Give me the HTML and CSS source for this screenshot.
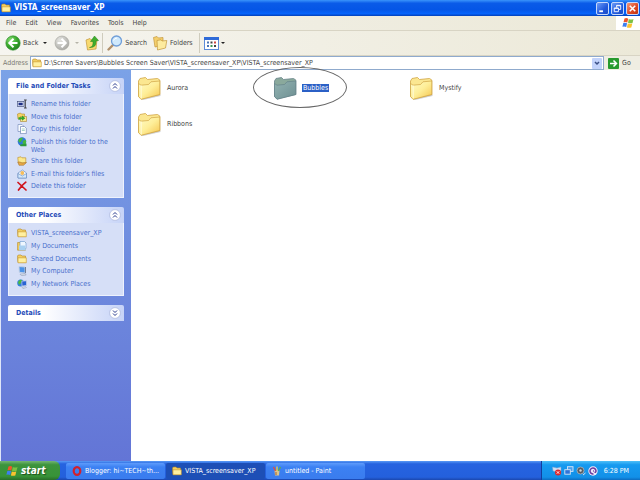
FILE: index.html
```
<!DOCTYPE html>
<html lang="en">

<head>
    <meta charset="UTF-8">
    <meta name="viewport" content="width=device-width, initial-scale=1.0">
    <title>VISTA_screensaver_XP</title>
    <link rel="stylesheet" href="styles.css">
</head>

<body>
    <svg class="sprite" aria-hidden="true">
        <defs>
            <linearGradient id="folder-front" x1="0" y1="0" x2="1" y2="1">
                <stop offset="0" stop-color="#fffcc8" />
                <stop offset=".5" stop-color="#feee98" />
                <stop offset="1" stop-color="#f5c44c" />
            </linearGradient>
            <linearGradient id="folder-selected" x1="0" y1="0" x2="1" y2="1">
                <stop offset="0" stop-color="#93b3b2" />
                <stop offset="1" stop-color="#6d8f92" />
            </linearGradient>
            <radialGradient id="green-ball" cx=".35" cy=".3" r=".8">
                <stop offset="0" stop-color="#8fe07a" />
                <stop offset=".5" stop-color="#3cab2e" />
                <stop offset="1" stop-color="#1f7a1c" />
            </radialGradient>
            <radialGradient id="gray-ball" cx=".35" cy=".3" r=".8">
                <stop offset="0" stop-color="#e6e6e2" />
                <stop offset="1" stop-color="#a5a5a0" />
            </radialGradient>
        </defs>
        <symbol id="big-folder" viewBox="0 0 24 24">
            <path d="M4 23.500 L22 18 L23.500 18.500 V20 L6 24z" fill="#777" opacity=".35" />
            <path d="M1.500 5 L3 2.500 L8.500 1.500 L10.500 3.500 L20.500 2.500 L22.800 4 V18.500 L4 23 L1.500 20.500z" fill="#fbe791" stroke="#d0a545" stroke-width=".8" />
            <path d="M1.500 7.500 L4 9.200 L11.500 8.500 L14 5.800 L22.800 5 V18.500 L4 23.300 L1.500 20.500z" fill="url(#folder-front)" stroke="#d0a545" stroke-width=".7" />
            <path d="M4.200 9.500 V22.500" stroke="#fffde0" stroke-width=".9" />
        </symbol>
        <symbol id="big-folder-selected" viewBox="0 0 24 24">
            <path d="M1.500 5 L3 2.500 L8.500 1.500 L10.500 3.500 L20.500 2.500 L22.800 4 V18.500 L4 23 L1.500 20.500z" fill="#8aa99c" stroke="#68848a" stroke-width=".8" />
            <path d="M1.500 7.500 L4 9.200 L11.500 8.500 L14 5.800 L22.800 5 V18.500 L4 23.300 L1.500 20.500z" fill="url(#folder-selected)" stroke="#64828a" stroke-width=".7" />
        </symbol>
        <symbol id="folder" viewBox="0 0 10 10">
            <path d="M.5 2 L1.300 1 H4 L5 2 H8.500 V8.500 H1z" fill="#f3cf62" stroke="#b58722" stroke-width=".6" />
            <path d="M1 8.800 V3.800 H9.300 V8.800z" fill="#fff0a0" stroke="#c8952b" stroke-width=".6" />
        </symbol>
        <symbol id="rename" viewBox="0 0 10 10">
            <rect x=".3" y="2.500" width="6.700" height="5" fill="#e8eefc" stroke="#44507c" stroke-width=".7" />
            <rect x="1.500" y="3.700" width="4.200" height="2.600" fill="#1d2f86" />
            <path d="M7 1 h2.700 M8.300 1 v8 M7 9 h2.700" stroke="#333" stroke-width=".9" />
        </symbol>
        <symbol id="move" viewBox="0 0 10 10">
            <path d="M.5 2 L3.500 1 L4.500 2 H7.500 V7 H1z" fill="#f4d466" stroke="#b58722" stroke-width=".6" />
            <path d="M3.500 4.500 H9.500 V9.500 H3.500z" fill="#fbe793" stroke="#a4812c" stroke-width=".6" />
            <path d="M1.500 7.800 V5.200 H5 V3.500 L8.300 6.200 L5 8.800 V7.300z" fill="#34a42b" />
        </symbol>
        <symbol id="copy" viewBox="0 0 10 10">
            <path d="M1 .5 H5 L6.500 2 V7.500 H1z" fill="#f8fbff" stroke="#6c83b5" stroke-width=".6" />
            <path d="M3.500 2.500 H7.500 L9.300 4.300 V9.600 H3.500z" fill="#fff" stroke="#5872ab" stroke-width=".6" />
            <path d="M4.800 5 h3 M4.800 6.500 h3" stroke="#7fc0b0" stroke-width=".7" />
        </symbol>
        <symbol id="globe" viewBox="0 0 10 10">
            <circle cx="5" cy="4.600" r="4.300" fill="#2f78d8" />
            <path d="M1.200 3 Q3 0 6 .8 L5 3 L3.800 5 L2 5.500z M6 3.500 L9 3 Q9.800 6 7.500 8 L5.500 6z" fill="#45b93c" />
            <path d="M3 7.500 L9.500 6.500 V9.300 H3.500z" fill="#2e9a3c" />
        </symbol>
        <symbol id="share" viewBox="0 0 10 10">
            <path d="M.8 1.500 L4 .8 L5 1.800 H8.800 V7 H1.300z" fill="#fce88c" stroke="#b98a22" stroke-width=".6" />
            <path d="M.8 6 Q3 5.500 5 7 L9.500 6.500 L6.500 9.300 H2z" fill="#e8a947" stroke="#9c6a24" stroke-width=".5" />
        </symbol>
        <symbol id="mail" viewBox="0 0 10 10">
            <path d="M1 4 L5.500 1 L9.500 4 V9 H1z" fill="#eef5ff" stroke="#5f86bd" stroke-width=".6" />
            <circle cx="5.300" cy="4" r="1.900" fill="#f5bd5c" />
            <path d="M1 4.500 L5.300 7 L9.500 4.500 V9 H1z" fill="#d4e8fb" stroke="#5f86bd" stroke-width=".6" />
        </symbol>
        <symbol id="delete" viewBox="0 0 10 10">
            <path d="M1 1.500 L9 9 M8.800 1.200 Q4.500 4.500 1.500 9" fill="none" stroke="#d0141c" stroke-width="1.700" stroke-linecap="round" />
        </symbol>
        <symbol id="documents" viewBox="0 0 10 10">
            <path d="M.6 1.500 H8.500 V9.200 H.6z" fill="#f4cf60" stroke="#b58722" stroke-width=".6" />
            <path d="M3 .5 H7.500 L9 2 V7.500 H3z" fill="#eef6ff" stroke="#6495cc" stroke-width=".6" />
            <path d="M2 4.500 H8 L9 9.200 H2z" fill="#a9d0f1" />
        </symbol>
        <symbol id="computer" viewBox="0 0 10 10">
            <path d="M2 .5 L8 1 V7 L2.300 6.300z" fill="#4c93e8" stroke="#c3d0e4" stroke-width=".9" />
            <path d="M8 1 H9 V7.500 L8 7z" fill="#6f7d97" />
            <path d="M3 8.200 L8 7.600 L9.200 9 L4.500 9.700z" fill="#dce3ee" stroke="#8290ac" stroke-width=".5" />
        </symbol>
        <symbol id="network" viewBox="0 0 10 10">
            <circle cx="3.700" cy="4" r="3.500" fill="#3580dc" />
            <path d="M1 3 L3 .8 L5 1 L4 4 L2 6z" fill="#4cba40" />
            <path d="M4.800 2.200 L9.500 1.800 V6.500 L5 7z" fill="#2863d4" stroke="#c8d3e6" stroke-width=".7" />
            <path d="M5 8.500 L8.500 7.500 L9.500 8.500 L6 9.700z" fill="#dce3ee" stroke="#8290ac" stroke-width=".4" />
        </symbol>
        <symbol id="windows" viewBox="0 0 12 12">
            <path d="M2.500 1.500 Q4.500 .6 6.200 1.700 L5.300 5.500 Q3.500 4.500 1.500 5.300z" fill="#f0552b" />
            <path d="M6.800 2 Q9 3 11.500 2 L10.500 6 Q8.200 6.800 6 5.800z" fill="#7cc142" />
            <path d="M1.300 6 Q3.200 5.200 5.100 6.300 L4.200 10 Q2.300 9 .4 9.800z" fill="#3c7ef0" />
            <path d="M5.800 6.600 Q8 7.500 10.300 6.600 L9.300 10.400 Q7.100 11.200 4.900 10.400z" fill="#fbc22f" />
        </symbol>
        <symbol id="chevrons-up" viewBox="0 0 12 12">
            <circle cx="6" cy="6" r="5.400" fill="#fff" stroke="#a9b4da" stroke-width=".7" />
            <path d="M4 5.500 L6 3.500 L8 5.500 M4 8.500 L6 6.500 L8 8.500" fill="none" stroke="#27388c" stroke-width="1" />
        </symbol>
        <symbol id="chevrons-down" viewBox="0 0 12 12">
            <circle cx="6" cy="6" r="5.400" fill="#fff" stroke="#a9b4da" stroke-width=".7" />
            <path d="M4 3.500 L6 5.500 L8 3.500 M4 6.500 L6 8.500 L8 6.500" fill="none" stroke="#27388c" stroke-width="1" />
        </symbol>
    </svg>

    <header class="titlebar">
        <svg class="icon"><use href="#folder" /></svg>
        <h1>VISTA_screensaver_XP</h1>
        <div class="window-buttons">
            <button type="button" aria-label="Minimize"><svg viewBox="0 0 12 12"><path d="M2.500 9 H6.500" stroke="#fff" stroke-width="2" /></svg></button>
            <button type="button" aria-label="Restore"><svg viewBox="0 0 12 12"><path d="M5 5 V2.500 H9.500 V7 H7.500 M2.500 5.500 H7 V9.500 H2.500z M2.500 5.800 H7 M5 3 H9.500" fill="none" stroke="#fff" stroke-width="1" /></svg></button>
            <button type="button" class="close" aria-label="Close"><svg viewBox="0 0 12 12"><path d="M3 3 L9 9 M9 3 L3 9" stroke="#fff" stroke-width="1.700" /></svg></button>
        </div>
    </header>

    <nav class="menubar">
        <button type="button">File</button>
        <button type="button">Edit</button>
        <button type="button">View</button>
        <button type="button">Favorites</button>
        <button type="button">Tools</button>
        <button type="button">Help</button>
        <span class="throbber"><svg><use href="#windows" /></svg></span>
    </nav>

    <div class="toolbar">
        <button type="button" class="back">
            <svg class="tool" viewBox="0 0 16 16"><circle cx="8" cy="8" r="7.200" fill="url(#green-ball)" stroke="#2a8a26" stroke-width=".6" /><path d="M8.500 3.800 L4.300 8 L8.500 12.200 M4.500 8 H12.500" fill="none" stroke="#fff" stroke-width="2" /></svg>
            Back
        </button>
        <span class="arrow"></span>
        <button type="button" class="forward" aria-label="Forward">
            <svg class="tool" viewBox="0 0 16 16"><circle cx="8" cy="8" r="7" fill="url(#gray-ball)" stroke="#a2a29c" stroke-width=".6" /><path d="M7.500 3.800 L11.700 8 L7.500 12.200 M11.500 8 H3.500" fill="none" stroke="#fff" stroke-width="2" /></svg>
        </button>
        <span class="arrow disabled"></span>
        <button type="button" class="up" aria-label="Up">
            <svg class="tool" viewBox="0 0 16 16"><path d="M2 5 L6 3.500 L7.500 5 L13 4.500 L12 14 L3.500 15z" fill="#f8da70" stroke="#c3963a" stroke-width=".7" /><path d="M5.500 12.500 Q9.500 12 9 6.500 H6.500 L10.500 1 L14.500 5.500 L12 6 Q12.500 13 5.500 12.500z" fill="#3fae2d" stroke="#23811a" stroke-width=".5" /></svg>
        </button>
        <span class="divider"></span>
        <button type="button" class="search">
            <svg class="tool" viewBox="0 0 16 16"><path d="M6 10 L1.500 14.500" stroke="#b0906c" stroke-width="2.400" stroke-linecap="round" /><circle cx="9.500" cy="6" r="5" fill="#cfe9fc" stroke="#6f9ed8" stroke-width="1.300" /><path d="M6.500 5.500 Q7.500 3 10 3" fill="none" stroke="#fff" /></svg>
            Search
        </button>
        <button type="button" class="folders">
            <svg class="tool" viewBox="0 0 16 16"><path d="M1.500 2.500 L5 1.500 L6.500 3 L11 2.500 V10 L3 12z" fill="#f4cf6c" stroke="#c3963a" stroke-width=".7" /><path d="M5 5.500 L9 4.800 L10 6 L14.800 5.500 L13.500 13 L5.500 15z" fill="#fdeb9e" stroke="#c3963a" stroke-width=".7" /></svg>
            Folders
        </button>
        <span class="divider"></span>
        <button type="button" class="views" aria-label="Views">
            <svg viewBox="0 0 15 13"><rect x=".5" y=".5" width="14" height="12" fill="#fff" stroke="#5c8cda" /><path d="M0 1.500 H15" stroke="#2f6bd8" stroke-width="3" /><path d="M3 5.500 h2 M3 9 h2" stroke="#4a75b5" stroke-width="2" /><path d="M6.500 5.500 h2 M10 9 h2" stroke="#444" stroke-width="2" /><path d="M6.500 9 h2" stroke="#3b9b55" stroke-width="2" /><path d="M10 5.500 h2" stroke="#d04a42" stroke-width="2" /></svg>
        </button>
        <span class="arrow"></span>
    </div>

    <form class="addressbar">
        <label for="address">Address</label>
        <div class="address-field">
            <svg class="icon"><use href="#folder" /></svg>
            <input type="text" id="address" value="D:\Scrren Savers\Bubbles Screen Saver\VISTA_screensaver_XP\VISTA_screensaver_XP">
            <button type="button" class="drop" aria-label="Show addresses"><svg viewBox="0 0 10 10"><path d="M3 4 L5 6 L7 4" fill="none" stroke="#3b4f86" stroke-width="1.500" /></svg></button>
        </div>
        <button type="button" class="go">
            <svg viewBox="0 0 11 11"><rect width="11" height="11" rx="1" fill="#279a2e" /><path d="M2 5.500 H8.500 M5.500 2.500 L8.500 5.500 L5.500 8.500" fill="none" stroke="#fff" stroke-width="1.500" /></svg>
            Go
        </button>
    </form>

    <main>
        <aside>
            <section class="panel">
                <h2>File and Folder Tasks <button type="button" aria-label="Collapse"><svg><use href="#chevrons-up" /></svg></button></h2>
                <ul class="tasks">
                    <li><svg class="icon"><use href="#rename" /></svg><a href="#">Rename this folder</a></li>
                    <li><svg class="icon"><use href="#move" /></svg><a href="#">Move this folder</a></li>
                    <li><svg class="icon"><use href="#copy" /></svg><a href="#">Copy this folder</a></li>
                    <li><svg class="icon"><use href="#globe" /></svg><a href="#">Publish this folder to the Web</a></li>
                    <li><svg class="icon"><use href="#share" /></svg><a href="#">Share this folder</a></li>
                    <li><svg class="icon"><use href="#mail" /></svg><a href="#">E-mail this folder's files</a></li>
                    <li><svg class="icon"><use href="#delete" /></svg><a href="#">Delete this folder</a></li>
                </ul>
            </section>
            <section class="panel">
                <h2>Other Places <button type="button" aria-label="Collapse"><svg><use href="#chevrons-up" /></svg></button></h2>
                <ul class="places">
                    <li><svg class="icon"><use href="#folder" /></svg><a href="#">VISTA_screensaver_XP</a></li>
                    <li><svg class="icon"><use href="#documents" /></svg><a href="#">My Documents</a></li>
                    <li><svg class="icon"><use href="#folder" /></svg><a href="#">Shared Documents</a></li>
                    <li><svg class="icon"><use href="#computer" /></svg><a href="#">My Computer</a></li>
                    <li><svg class="icon"><use href="#network" /></svg><a href="#">My Network Places</a></li>
                </ul>
            </section>
            <section class="panel">
                <h2>Details <button type="button" aria-label="Expand"><svg><use href="#chevrons-down" /></svg></button></h2>
            </section>
        </aside>
        <ul class="files">
            <li><svg><use href="#big-folder" /></svg><span>Aurora</span></li>
            <li class="selected">
                <svg><use href="#big-folder-selected" /></svg><span>Bubbles</span>
                <i class="ring"></i>
            </li>
            <li><svg><use href="#big-folder" /></svg><span>Mystify</span></li>
            <li><svg><use href="#big-folder" /></svg><span>Ribbons</span></li>
        </ul>
    </main>

    <footer class="taskbar">
        <button type="button" class="start"><svg><use href="#windows" /></svg>start</button>
        <div class="windows">
            <button type="button"><svg class="icon" viewBox="0 0 10 10"><ellipse cx="5" cy="5" rx="3.300" ry="3.900" fill="none" stroke="#d3202c" stroke-width="2.200" /></svg>Blogger: hi~TECH~th...</button>
            <button type="button" class="active"><svg class="icon"><use href="#folder" /></svg>VISTA_screensaver_XP</button>
            <button type="button"><svg class="icon" viewBox="0 0 10 10"><path d="M2.500 4.500 H7.500 L7 9.500 H3z" fill="#d9c48e" /><path d="M3.500 5 L1.500 1" stroke="#ee4a32" stroke-width="1.300" /><path d="M5 5 V.5" stroke="#f5d23b" stroke-width="1.300" /><path d="M6.500 5 L8.500 1" stroke="#58b04c" stroke-width="1.300" /><path d="M4 6 V9" stroke="#a9642f" stroke-width="1" /></svg>untitled - Paint</button>
        </div>
        <div class="tray">
            <svg viewBox="0 0 10 10"><path d="M.5 1 L5 2 L9 1 V5 L5 6 L1 5z" fill="#cfe0f5" stroke="#7fa0ce" stroke-width=".5" /><circle cx="6" cy="6.500" r="3" fill="#e0262b" /><path d="M4.800 5.300 L7.200 7.700 M7.200 5.300 L4.800 7.700" stroke="#fff" stroke-width=".9" /></svg>
            <svg viewBox="0 0 10 10"><rect x="3.500" y=".7" width="5.500" height="4.700" fill="#4aa0ee" stroke="#d7e6f6" stroke-width=".9" /><rect x=".8" y="3.700" width="5.500" height="4.500" fill="#2d74d9" stroke="#d7e6f6" stroke-width=".9" /></svg>
            <svg viewBox="0 0 10 10"><circle cx="4.500" cy="4.500" r="3.500" fill="#555d66" stroke="#aeb5ba" stroke-width=".8" /><circle cx="4.500" cy="4.500" r="1.200" fill="#d2d5d8" /><path d="M7 9 L9.500 7" stroke="#cfe0f5" /></svg>
            <svg viewBox="0 0 10 10"><circle cx="5" cy="5" r="4.700" fill="#eee8fa" /><path d="M5.500 8 A3 3 0 1 1 8 5 Q7.800 6.500 6.500 6.300 M5 5 h.8" fill="none" stroke="#6a3a9e" stroke-width="1.500" /></svg>
            <time>6:28 PM</time>
        </div>
    </footer>
</body>

</html>
```
FILE: styles.css
```
* {
    box-sizing: border-box;
}

html,
body {
    height: 100%;
    margin: 0;
}

body {
    display: flex;
    flex-direction: column;
    overflow: hidden;
    background: #ece9d8;
    color: #444;
    font: 7px/8px "DejaVu Sans Condensed", "DejaVu Sans", sans-serif;
}

button,
input {
    margin: 0;
    padding: 0;
    border: 0;
    background: none;
    color: inherit;
    font: inherit;
}

ul {
    margin: 0;
    padding: 0;
    list-style: none;
}

svg {
    display: block;
    flex: none;
}

.sprite {
    position: absolute;
    width: 0;
    height: 0;
}

.icon {
    width: 10px;
    height: 10px;
}

/* title bar */
.titlebar {
    display: flex;
    align-items: center;
    gap: 3px;
    height: 16px;
    padding: 0 1px;
    background: linear-gradient(#3a94fb, #0a5be8 20%, #0556e6 60%, #0664fb 85%, #0340b8);
    color: #fff;
}

.titlebar h1 {
    flex: 1;
    margin: 0;
    font-size: 8px;
    line-height: 12px;
}

.window-buttons {
    display: flex;
    gap: 2px;
}

.window-buttons button {
    width: 13px;
    height: 13px;
    border: 1px solid #c5d8fb;
    border-radius: 2px;
    background: linear-gradient(135deg, #6d9bf6, #2159dc 60%, #1c4cc4);
}

.window-buttons .close {
    background: linear-gradient(135deg, #f0987c, #dd4722 60%, #b93412);
}

/* menu, toolbar, address */
.menubar {
    display: flex;
    align-items: center;
    gap: 9px;
    height: 15px;
    padding-left: 6px;
    border-bottom: 1px solid #d8d4c4;
    background: linear-gradient(90deg, #f2f1ea, #ece9d8);
}

.throbber {
    display: flex;
    align-items: center;
    justify-content: center;
    align-self: stretch;
    width: 24px;
    margin-left: auto;
    background: #fff;
}

.throbber svg {
    width: 12px;
    height: 12px;
}

.toolbar {
    display: flex;
    align-items: center;
    height: 25px;
    padding-left: 5px;
    border-bottom: 1px solid #d8d4c4;
    background: linear-gradient(90deg, #f6f5f0, #ece9d8);
}

.toolbar button {
    display: flex;
    align-items: center;
    gap: 2px;
}

.tool {
    width: 16px;
    height: 16px;
}

.arrow {
    margin-left: 5px;
    border: 2px solid transparent;
    border-top-color: #222;
    border-bottom: 0;
}

.arrow.disabled {
    border-top-color: #b5b3a8;
}

.forward {
    margin-left: 7px;
}

.up {
    margin-left: 5px;
}

.divider {
    align-self: stretch;
    margin: 2px 4px 2px 2px;
    border-left: 1px solid #cfccbd;
}

.folders {
    margin: 0 4px 0 5px;
}

.views svg {
    width: 15px;
    height: 13px;
}

.views + .arrow {
    margin-left: 2px;
}

.addressbar {
    display: flex;
    align-items: center;
    height: 14px;
    margin: 0;
    background: #efede2;
}

.addressbar label {
    width: 30px;
    padding-left: 3px;
    color: #7b7a72;
}

.address-field {
    display: flex;
    flex: 1;
    align-items: center;
    gap: 2px;
    height: 14px;
    padding: 0 1px;
    border: 1px solid #8faacd;
    background: #fff;
}

.address-field input {
    flex: 1;
    min-width: 0;
    outline: 0;
}

.drop {
    width: 10px;
    height: 11px;
    border-radius: 1px;
    background: #c3d3fb;
}

.go {
    display: flex;
    align-items: center;
    gap: 3px;
    width: 36px;
    padding-left: 4px;
}

.go svg {
    width: 11px;
    height: 11px;
}

/* side pane */
main {
    display: flex;
    flex: 1;
    min-height: 0;
    background: #fff;
}

aside {
    display: flex;
    flex-direction: column;
    gap: 9px;
    width: 131px;
    padding: 8px 7px 0;
    border-left: 1px solid #dfe6f8;
    background: linear-gradient(#7ba2e7, #6375d6);
}

.panel h2 {
    display: flex;
    align-items: center;
    justify-content: space-between;
    height: 16px;
    margin: 0;
    padding: 0 3px 0 8px;
    border-radius: 2px 2px 0 0;
    background: linear-gradient(90deg, #fff 30%, #c6d3f7);
    color: #1f4bb8;
    font-size: 7px;
}

.panel h2 svg {
    width: 12px;
    height: 12px;
}

.panel ul {
    display: flex;
    flex-direction: column;
    justify-content: space-between;
    padding: 5px 8px 6px;
    border: 1px solid #eef2fd;
    border-top: 0;
    background: #d6dff7;
}

.tasks {
    min-height: 104px;
}

.places {
    min-height: 73px;
}

.panel li {
    display: flex;
    gap: 4px;
}

.panel a {
    padding-top: 1px;
    color: #4a70cc;
    text-decoration: none;
}

/* file list */
.files {
    display: grid;
    flex: 1;
    grid-template-columns: repeat(auto-fill, 136px);
    grid-auto-rows: 36px;
    align-content: start;
    padding: 0 6px;
}

.files li {
    display: flex;
    position: relative;
    align-items: center;
    gap: 5px;
}

.files svg {
    width: 24px;
    height: 24px;
}

.files span {
    padding: 0 1px;
}

.selected span {
    background: #2b60c6;
    color: #fff;
}

/* hand-drawn circle round the selected folder, reaches over the address bar */
.ring {
    position: absolute;
    top: -3px;
    left: -20px;
    width: 94px;
    height: 41px;
    border: 1px solid #666;
    border-radius: 50%;
}

/* taskbar */
.taskbar {
    display: flex;
    height: 19px;
    background: linear-gradient(#5a9bf5, #2663e0 15%, #2460dc 85%, #1b47ae);
    color: #fff;
}

.start {
    display: flex;
    align-items: center;
    gap: 3px;
    width: 60px;
    padding-left: 6px;
    border-radius: 0 6px 6px 0;
    background: linear-gradient(#74b574, #3c943c 20%, #389338 80%, #286e28);
    font-size: 10px;
    font-style: italic;
    font-weight: bold;
    text-shadow: 1px 1px 1px #1d4f1d;
}

.start svg {
    width: 12px;
    height: 12px;
}

.windows {
    display: flex;
    flex: 1;
    gap: 1px;
    padding: 2px 0 1px 6px;
}

.windows button {
    display: flex;
    align-items: center;
    gap: 3px;
    flex: 0 1 99px;
    padding-left: 6px;
    border-radius: 2px;
    background: linear-gradient(#5e9bfb, #3c81f3 25%, #3a7cee);
    white-space: nowrap;
}

.windows .active {
    background: #1d4fb6;
}

.tray {
    display: flex;
    align-items: center;
    gap: 2px;
    padding: 0 11px 0 10px;
    border-left: 1px solid #123f9e;
    background: linear-gradient(#4fc0f8, #169af0 20%, #1290e8 85%, #0d6cc0);
}

.tray svg {
    width: 10px;
    height: 10px;
}

.tray time {
    margin-left: 4px;
}
```
